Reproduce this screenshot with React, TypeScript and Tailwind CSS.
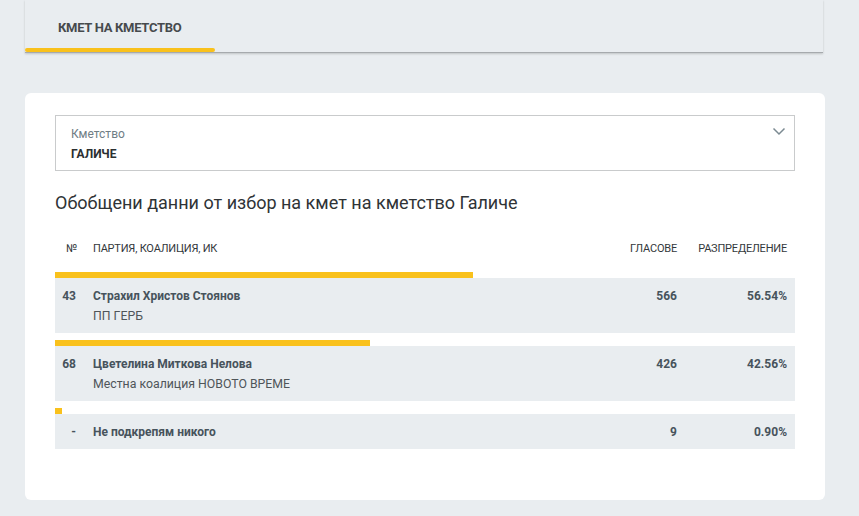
import React from "react";

const rows = [
  { num: "43", name: "Страхил Христов Стоянов", party: "ПП ГЕРБ", votes: "566", pct: 56.54 },
  { num: "68", name: "Цветелина Миткова Нелова", party: "Местна коалиция НОВОТО ВРЕМЕ", votes: "426", pct: 42.56 },
  { num: "-", name: "Не подкрепям никого", party: "", votes: "9", pct: 0.9 },
];

export default function App() {
  return (
    <div className="min-h-screen bg-[#e9edf0] pt-0 pb-[17px]" style={{ fontFamily: "Roboto, 'Noto Sans', sans-serif" }}>
      <div className="ml-[25px] w-[798px] h-[53px] flex items-end border-b border-[#a6aaad] shadow-[0_1px_2px_rgba(0,0,0,0.18)]">
        <div className="w-[190px] h-full flex flex-col">
          <div className="flex-1 flex items-center pl-[33px] pt-[7px] text-[13px] font-bold text-[#464a4d] tracking-[-0.3px]">
            КМЕТ НА КМЕТСТВО
          </div>
          <div className="h-[4px] bg-[#f9c11c] rounded-[2px]" />
        </div>
      </div>

      <div className="ml-[25px] mt-[40px] w-[800px] bg-white rounded-[6px] pt-[22px] px-[30px] pb-[51px]">
        <div className="relative h-[56px] border border-[#c9cbcc] pl-[15px] pt-[10px]">
          <div className="text-[12px] leading-[16px] text-[#6f7d85]">Кметство</div>
          <div className="mt-[4px] text-[12px] leading-[16px] font-bold text-[#2b2f31]">ГАЛИЧЕ</div>
          <svg className="absolute right-[8px] top-[11px]" width="14" height="9" viewBox="0 0 14 9">
            <polyline points="1.5,1.5 7,7 12.5,1.5" fill="none" stroke="#7b8a92" strokeWidth="1.5" />
          </svg>
        </div>

        <h2 className="mt-[20px] text-[18px] leading-[24px] text-[#2f3336] font-normal">
          Обобщени данни от избор на кмет на кметство Галиче
        </h2>

        <div className="mt-[26px] flex text-[11px] leading-[16px] text-[#33383b] tracking-[-0.2px]">
          <div className="w-[22px] text-right">№</div>
          <div className="flex-1 pl-[16px]">ПАРТИЯ, КОАЛИЦИЯ, ИК</div>
          <div className="w-[80px] text-right">ГЛАСОВЕ</div>
          <div className="w-[118px] text-right pr-[8px]">РАЗПРЕДЕЛЕНИЕ</div>
        </div>

        <div className="mt-[15px] flex flex-col gap-[7px]">
          {rows.map((r) => (
            <div key={r.num}>
              <div className="h-[6px] bg-[#f9c11c]" style={{ width: `${Math.max(r.pct, 0.85)}%` }} />
              <div className="flex bg-[#e9edf0] pt-[10px] pb-[9px] text-[12px] leading-[16px] text-[#47535c]">
                <div className="w-[21px] text-right font-bold">{r.num}</div>
                <div className="flex-1 pl-[17px]">
                  <div className="font-bold">{r.name}</div>
                  {r.party && <div className="mt-[4px] text-[12.3px] text-[#4f5559]">{r.party}</div>}
                </div>
                <div className="w-[80px] text-right font-bold">{r.votes}</div>
                <div className="w-[118px] text-right pr-[8px] font-bold">{r.pct.toFixed(2)}%</div>
              </div>
            </div>
          ))}
        </div>
      </div>
    </div>
  );
}
